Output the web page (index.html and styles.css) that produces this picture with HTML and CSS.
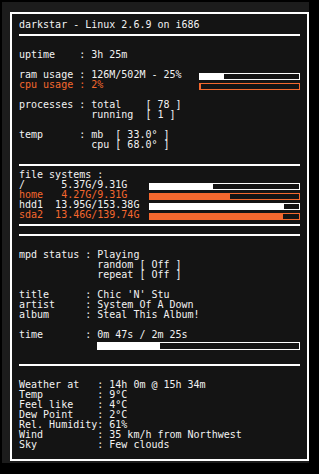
FILE: index.html
```html
<!DOCTYPE html>
<html lang="en">
<head>
  <meta charset="UTF-8">
  <meta name="viewport" content="width=device-width, initial-scale=1.0">
  <title>darkstar - conky</title>
  <link rel="stylesheet" href="styles.css">
</head>
<body>
  <div class="frame">
    <div class="panel">
      <div class="row">darkstar - Linux 2.6.9 on i686</div>
      <div class="row"><div class="hr"></div></div>
      <div class="row"></div>

      <div class="row">uptime    : 3h 25m</div>
      <div class="row"></div>

      <div class="row"><span>ram usage : 126M/502M - 25%</span><span class="bar short"><span class="fill" style="width:24%"></span></span></div>
      <div class="row hot"><span>cpu usage : 2%</span><span class="bar short"><span class="fill" style="width:1%"></span></span></div>
      <div class="row"></div>

      <div class="row">processes : total    [ 78 ]</div>
      <div class="row">            running  [ 1 ]</div>
      <div class="row"></div>

      <div class="row">temp      : mb  [ 33.0° ]</div>
      <div class="row">            cpu [ 68.0° ]</div>
      <div class="row"></div>
      <div class="row"><div class="hr"></div></div>

      <div class="row">file systems :</div>
      <div class="row"><span>/      5.37G/9.31G</span><span class="bar long"><span class="fill" style="width:42%"></span></span></div>
      <div class="row hot"><span>home   4.27G/9.31G</span><span class="bar long"><span class="fill" style="width:54%"></span></span></div>
      <div class="row"><span>hdd1  13.95G/153.38G</span><span class="bar long"><span class="fill" style="width:90%"></span></span></div>
      <div class="row hot"><span>sda2  13.46G/139.74G</span><span class="bar long"><span class="fill" style="width:89%"></span></span></div>
      <div class="row"><div class="hr"></div></div>
      <div class="row"><div class="hr"></div></div>
      <div class="row"></div>

      <div class="row">mpd status : Playing</div>
      <div class="row">             random [ Off ]</div>
      <div class="row">             repeat [ Off ]</div>
      <div class="row"></div>
      <div class="row">title      : Chic 'N' Stu</div>
      <div class="row">artist     : System Of A Down</div>
      <div class="row">album      : Steal This Album!</div>
      <div class="row"></div>
      <div class="row">time       : 0m 47s / 2m 25s</div>
      <div class="row"><span class="bar progress"><span class="fill" style="width:31%"></span></span></div>
      <div class="row"></div>
      <div class="row"><div class="hr"></div></div>
      <div class="row"></div>

      <div class="row">Weather at   : 14h 0m @ 15h 34m</div>
      <div class="row">Temp         : 9°C</div>
      <div class="row">Feel like    : 4°C</div>
      <div class="row">Dew Point    : 2°C</div>
      <div class="row">Rel. Humidity: 61%</div>
      <div class="row">Wind         : 35 km/h from Northwest</div>
      <div class="row">Sky          : Few clouds</div>
    </div>
  </div>
</body>
</html>
```

FILE: styles.css
```css
body {
  margin: 0;
  background: #000;
  color: #f2f2f2;
  font-family: "DejaVu Sans Mono", monospace;
  font-size: 10px;
  line-height: 10px;
}
.frame {
  margin: 2px 0 0 2px;
  width: 299px;
  height: 451px;
  padding: 10px 0 0 8px;
  background: #1c1c1c;
}
.panel {
  box-sizing: border-box;
  width: 299px;
  height: 449px;
  padding: 6px 7px 0 7px;
  border: 2px solid #fff;
  background: #141414;
}
.row {
  display: flex;
  height: 10px;
  white-space: pre;
}
.hot {
  color: #f4682e;
}
.hr {
  flex: 1;
  height: 2px;
  margin-top: 4px;
  background: #fff;
}
.bar {
  box-sizing: border-box;
  display: block;
  height: 7px;
  margin-top: 3px;
  margin-left: auto;
  border: 1px solid #fff;
}
.hot .bar {
  border-color: #f4682e;
}
.bar .fill {
  display: block;
  height: 100%;
  background: #fff;
}
.hot .bar .fill {
  background: #f4682e;
}
.short {
  width: 101px;
}
.long {
  width: 151px;
}
.progress {
  width: 203px;
  height: 8px;
  margin-top: 2px;
  margin-left: 78px;
}
```
